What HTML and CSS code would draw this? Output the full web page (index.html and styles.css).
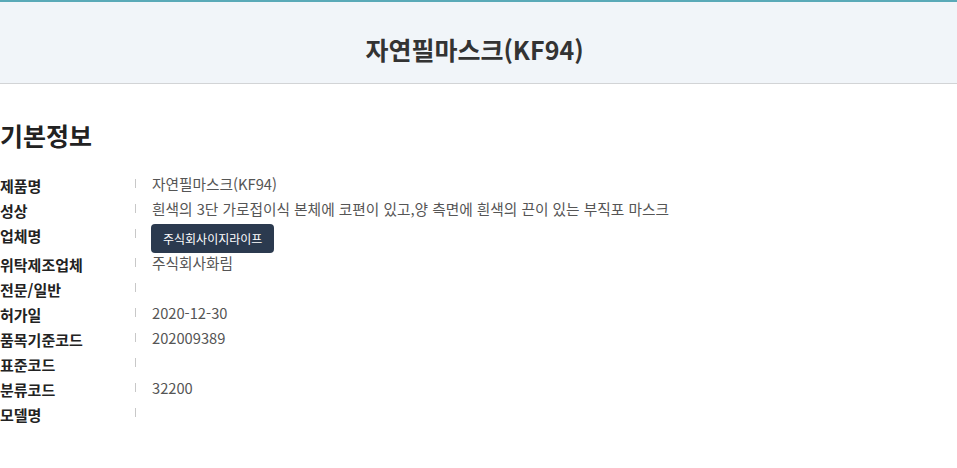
FILE: index.html
```html
<!DOCTYPE html>
<html lang="ko">
<head>
  <meta charset="UTF-8" />
  <meta name="viewport" content="width=device-width, initial-scale=1.0"/>
  <title>자연필마스크(KF94)</title>
  <link rel="stylesheet" href="styles.css">
</head>
<body>
  <div class="top-bar">
    <h1>자연필마스크(KF94)</h1>
  </div>

  <div class="info">
    <h2>기본정보</h2>
    <div class="row"><span class="label">제품명</span><span class="sep"></span><span class="value">자연필마스크(KF94)</span></div>
    <div class="row"><span class="label">성상</span><span class="sep"></span><span class="value">흰색의 3단 가로접이식 본체에 코편이 있고,양 측면에 흰색의 끈이 있는 부직포 마스크</span></div>
    <div class="row"><span class="label">업체명</span><span class="sep"></span><span class="value"><button class="company-btn">주식회사이지라이프</button></span></div>
    <div class="row"><span class="label">위탁제조업체</span><span class="sep"></span><span class="value">주식회사화림</span></div>
    <div class="row"><span class="label">전문/일반</span><span class="sep"></span><span class="value"></span></div>
    <div class="row"><span class="label">허가일</span><span class="sep"></span><span class="value">2020-12-30</span></div>
    <div class="row"><span class="label">품목기준코드</span><span class="sep"></span><span class="value">202009389</span></div>
    <div class="row"><span class="label">표준코드</span><span class="sep"></span><span class="value"></span></div>
    <div class="row"><span class="label">분류코드</span><span class="sep"></span><span class="value">32200</span></div>
    <div class="row"><span class="label">모델명</span><span class="sep"></span><span class="value"></span></div>
  </div>
</body>
</html>
```

FILE: styles.css
```css
body {
  font-family: "Noto Sans CJK KR", "Noto Sans", sans-serif;
  background-color: #fff;
  margin: 0;
  color: #222;
}
.top-bar {
  background-color: #f1f5f9;
  border-top: 2px solid #5aaab8;
  border-bottom: 1px solid #d2d4d6;
  padding: 29px 8px 16px 0;
  text-align: center;
}
h1 {
  margin: 0;
  font-size: 25px;
  line-height: 36px;
  font-weight: 700;
  color: #333;
}
.info h2 {
  margin: 33px 0 18px;
  font-size: 25px;
  line-height: 36px;
  font-weight: 700;
  color: #222;
}
.row {
  display: flex;
  align-items: flex-start;
  font-size: 15px;
}
.label {
  width: 135px;
  flex-shrink: 0;
  padding-top: 4px;
  line-height: 21px;
  font-weight: 700;
  color: #222;
}
.sep {
  width: 1px;
  height: 9px;
  margin: 8px 16px 0 0;
  background-color: #c8c8c8;
}
.value {
  font-size: 14.7px;
  line-height: 25px;
  min-height: 25px;
  color: #555;
}
.company-btn {
  display: block;
  margin: 3px 0 -3px -1px;
  padding: 0 12px;
  height: 29px;
  font-family: inherit;
  font-size: 12px;
  color: #fff;
  background-color: #2b3a4f;
  border: none;
  border-radius: 4px;
  cursor: pointer;
}
```
